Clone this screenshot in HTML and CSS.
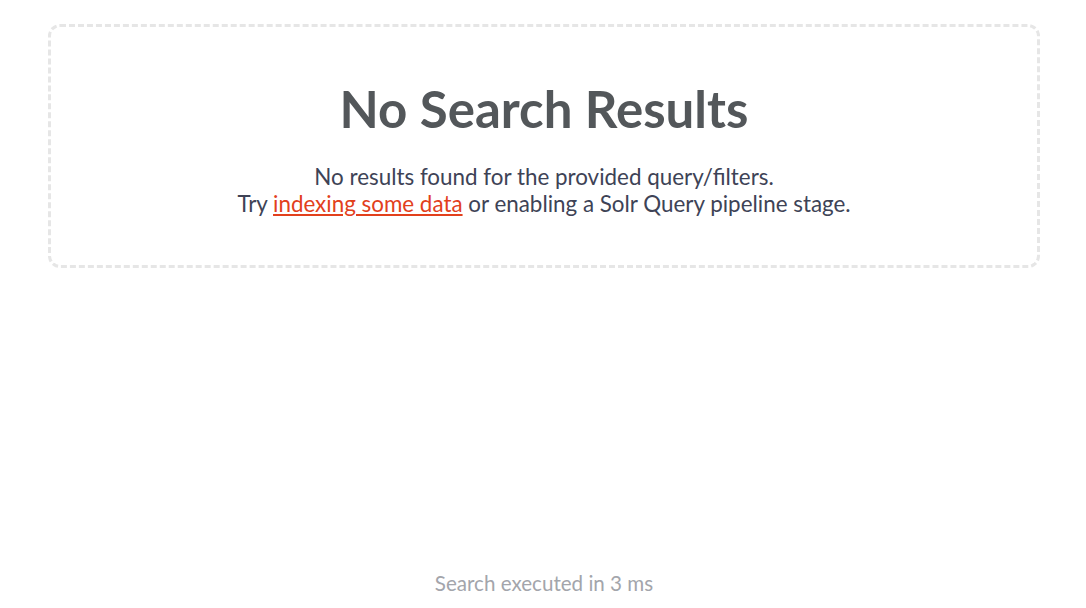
FILE: index.html
```html
<!DOCTYPE html>
<html>
<head>
<meta charset="utf-8">
<link rel="stylesheet" href="styles.css">
</head>
<body>
<div class="page">
  <div class="empty">
    <h1 class="empty-title">No Search Results</h1>
    <p class="empty-text">No results found for the provided query/filters.<br>Try <a class="empty-link" href="#">indexing some data</a> or enabling a Solr Query pipeline stage.</p>
  </div>
  <div class="footer">Search executed in 3 ms</div>
</div>
</body>
</html>
```
FILE: styles.css
```css
html, body {
  margin: 0;
  padding: 0;
  background: #fff;
}
body {
  font-family: Lato, "Open Sans", sans-serif;
}
.page {
  height: 608px;
  display: flex;
  flex-direction: column;
  padding: 24px 46px 0 48px;
  box-sizing: border-box;
}
.empty {
  border: 3px dashed #e6e6e6;
  border-radius: 12px;
  height: 244px;
  box-sizing: border-box;
  text-align: center;
  padding-top: 52px;
}
.empty-title {
  margin: 0;
  font-size: 51px;
  font-weight: 700;
  color: #53575a;
  line-height: 60px;
}
.empty-text {
  margin: 24px 0 0;
  font-size: 22.4px;
  line-height: 27px;
  color: #3e4356;
}
.empty-link {
  color: #e2401c;
  text-decoration: underline;
}
.footer {
  margin-top: auto;
  padding-bottom: 13px;
  text-align: center;
  font-size: 20.6px;
  color: #a3a5ab;
}
```
